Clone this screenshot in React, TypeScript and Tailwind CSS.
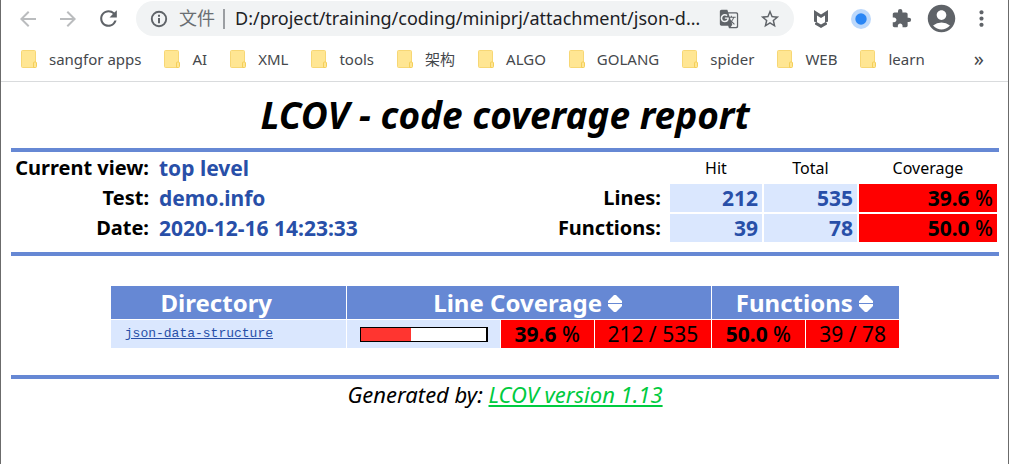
import type { ReactNode } from "react";
import {
  MdAccountCircle,
  MdArrowBack,
  MdArrowForward,
  MdExtension,
  MdGTranslate,
  MdMoreVert,
  MdRefresh,
  MdStarBorder,
} from "react-icons/md";

const bookmarks = ["sangfor apps", "AI", "XML", "tools", "架构", "ALGO", "GOLANG", "spider", "WEB", "learn"];

function ToolButton({ label, children, className = "" }: { label: string; children: ReactNode; className?: string }) {
  return (
    <button type="button" aria-label={label} className={`flex h-9 w-10 shrink-0 items-center justify-center text-[#5f6368] ${className}`}>
      {children}
    </button>
  );
}

function FolderIcon() {
  return (
    <svg width="16" height="18" viewBox="0 0 16 18" className="shrink-0" aria-hidden="true">
      <rect x="0.5" y="0.5" width="14" height="17" rx="1" fill="#ffe693" stroke="#f7d775" />
      <path d="M12.500 17.500v-4.500q0-1 1-1h1q1 0 1 1v3.500q0 1-1 1z" fill="#ffe693" stroke="#f4cf5a" />
    </svg>
  );
}

function InfoIcon() {
  return (
    <svg width="20" height="20" viewBox="0 0 20 20" className="shrink-0" aria-hidden="true">
      <circle cx="10" cy="10" r="7.200" fill="none" stroke="#5f6368" strokeWidth="1.900" />
      <path d="M9 5.800h2v2H9zM9 9h2v5.200H9z" fill="#5f6368" />
    </svg>
  );
}

function ShieldIcon() {
  return (
    <svg width="14" height="18" viewBox="0 0 14 18" aria-hidden="true">
      <path d="M0 0l7 4.500L14 0v11.500l-3 1.500V5.500L7 8 3 5.500V13l-3-1.500z" fill="#5f6368" />
      <path d="M1 13.300l2-1 4 2.200 4-2.200 2 1v1.200L7 18l-6-3.500z" fill="#5f6368" />
    </svg>
  );
}

function SortIcon() {
  return (
    <svg width="14" height="17" viewBox="0 0 14 17" className="inline-block align-baseline" aria-hidden="true">
      <path d="M6 0h2l6 6v2H0V6zM6 17h2l6-6V9H0v2z" fill="#fff" />
    </svg>
  );
}

function Toolbar() {
  return (
    <div className="flex h-[37px] items-center pl-[7px] pr-[7px]">
      <ToolButton label="Back" className="text-[#babcbe]"><MdArrowBack size={24} /></ToolButton>
      <ToolButton label="Forward" className="text-[#babcbe]"><MdArrowForward size={24} /></ToolButton>
      <ToolButton label="Reload"><MdRefresh size={25} /></ToolButton>
      <div className="ml-2 mr-[7px] flex h-[35px] min-w-0 flex-1 items-center rounded-full bg-[#f1f3f4] pl-[13px] pr-[13px]">
        <InfoIcon />
        <span className="ml-2.5 shrink-0 text-[18px] text-[#6a6e72]">文件</span>
        <span className="ml-2 h-5 w-0.5 shrink-0 bg-[#9b9ea2]" />
        <input
          aria-label="Address"
          readOnly
          value="D:/project/training/coding/miniprj/attachment/json-data-structure/index.html"
          className="ml-2.5 min-w-0 flex-1 text-ellipsis bg-transparent text-[18px] text-[#202124] outline-none"
        />
        <button type="button" aria-label="Translate" className="ml-4 shrink-0 text-[#5f6368]"><MdGTranslate size={20} /></button>
        <button type="button" aria-label="Bookmark" className="ml-5 shrink-0 text-[#5f6368]"><MdStarBorder size={22} /></button>
      </div>
      <ToolButton label="Shield"><ShieldIcon /></ToolButton>
      <ToolButton label="Recorder">
        <svg width="20" height="20" viewBox="0 0 20 20" aria-hidden="true">
          <circle cx="10" cy="10" r="10" fill="#bcd8fb" />
          <circle cx="10" cy="10" r="5.700" fill="#2a86f5" />
        </svg>
      </ToolButton>
      <ToolButton label="Extensions"><MdExtension size={21} /></ToolButton>
      <ToolButton label="Profile"><MdAccountCircle size={33} /></ToolButton>
      <ToolButton label="Menu"><MdMoreVert size={25} /></ToolButton>
    </div>
  );
}

function Bookmarks() {
  return (
    <nav className="flex h-[45px] items-center border-b border-[#d9dbdd] pl-5 pr-6 text-[15px] text-[#45484c]">
      <div className="flex min-w-0 flex-1 items-center gap-[23px]">
        {bookmarks.map((name) => (
          <a key={name} href="#" className="flex shrink-0 items-center gap-3">
            <FolderIcon />
            {name}
          </a>
        ))}
      </div>
      <button type="button" aria-label="More bookmarks" className="text-[20px] leading-5">»</button>
    </nav>
  );
}

const label = "p-0 text-right font-bold";
const value = "p-0 pl-1 text-left text-[21px] font-bold text-[#284fa8]";
const count = "bg-[#dae7fe] p-0 pr-1 text-right text-[21px] font-bold text-[#284fa8]";
const low = "bg-[#ff0000] p-0 pr-1 text-right text-[21px] font-bold";
const columnHead = "p-0 text-center text-[16px] font-normal";

function Percent({ amount }: { amount: string }) {
  return (
    <>
      {amount} <span className="font-medium">%</span>
    </>
  );
}

function Summary() {
  return (
    <table className="w-full table-fixed border-separate border-spacing-[2px] text-[20px] leading-7">
      <colgroup>
        <col className="w-[140px]" />
        <col />
        <col className="w-[140px]" />
        <col className="w-[92px]" />
        <col className="w-[93px]" />
        <col className="w-[138px]" />
      </colgroup>
      <tbody>
        <tr>
          <th scope="row" className={`${label} pr-1`}>Current view:</th>
          <td className={value}>top level</td>
          <td />
          <th scope="col" className={columnHead}>Hit</th>
          <th scope="col" className={columnHead}>Total</th>
          <th scope="col" className={columnHead}>Coverage</th>
        </tr>
        <tr>
          <th scope="row" className={`${label} pr-1`}>Test:</th>
          <td className={value}>demo.info</td>
          <th scope="row" className={`${label} pr-[7px]`}>Lines:</th>
          <td className={count}>212</td>
          <td className={count}>535</td>
          <td className={low}><Percent amount="39.6" /></td>
        </tr>
        <tr>
          <th scope="row" className={`${label} pr-1`}>Date:</th>
          <td className={value}>2020-12-16 14:23:33</td>
          <th scope="row" className={`${label} pr-[7px]`}>Functions:</th>
          <td className={count}>39</td>
          <td className={count}>78</td>
          <td className={low}><Percent amount="50.0" /></td>
        </tr>
      </tbody>
    </table>
  );
}

function Directories() {
  const head = "bg-[#6688d4] p-0 text-center font-bold";
  const cell = "bg-[#ff0000] p-0 text-center";
  return (
    <table className="mx-auto w-4/5 table-fixed border-separate border-spacing-px">
      <colgroup>
        <col className="w-[30%]" />
        <col />
        <col className="w-[11.9%]" />
        <col className="w-[14.8%]" />
        <col className="w-[11.9%]" />
        <col className="w-[11.9%]" />
      </colgroup>
      <thead className="text-[24px] leading-[33px] text-white">
        <tr>
          <th scope="col" className={`${head} pr-6`}>Directory</th>
          <th scope="col" colSpan={3} className={`${head} pr-0.5`}>Line Coverage <SortIcon /></th>
          <th scope="col" colSpan={2} className={`${head} pr-0.5`}>Functions <SortIcon /></th>
        </tr>
      </thead>
      <tbody className="text-[21px] leading-7">
        <tr>
          <td className="bg-[#dae7fe] p-0 pl-3.5 align-middle">
            <a href="#" className="block font-['Liberation_Mono',monospace] text-[13px] text-[#284fa8] underline">json-data-structure</a>
          </td>
          <td className="bg-[#dae7fe] p-0 pl-[13px] pr-3 align-middle">
            <div role="img" aria-label="39.6%" className="h-[15px] border border-r-2 border-black bg-white">
              <div className="h-full w-2/5 bg-[#ff3530]" />
            </div>
          </td>
          <td className={`${cell} font-bold`}><Percent amount="39.6" /></td>
          <td className={cell}>212 / 535</td>
          <td className={`${cell} font-bold`}><Percent amount="50.0" /></td>
          <td className={cell}>39 / 78</td>
        </tr>
      </tbody>
    </table>
  );
}

export default function App() {
  return (
    <div className="min-h-screen border-x border-[#6b6b6b] bg-white font-['Noto_Sans','Noto_Sans_CJK_SC',sans-serif] text-black">
      <Toolbar />
      <Bookmarks />
      <main className="pb-6 pl-2.5 pr-[9px]">
        <h1 className="py-2.5 text-center text-[37px] font-bold italic leading-[46px]">LCOV - code coverage report</h1>
        <section className="border-y-4 border-[#6688d4] pb-2">
          <Summary />
        </section>
        <section className="border-b-4 border-[#6688d4] pb-[26px] pt-[29px]">
          <Directories />
        </section>
        <footer className="text-center text-[22px] italic leading-[30px]">
          Generated by: <a href="#" className="text-[#00cb40] underline">LCOV version 1.13</a>
        </footer>
      </main>
    </div>
  );
}
